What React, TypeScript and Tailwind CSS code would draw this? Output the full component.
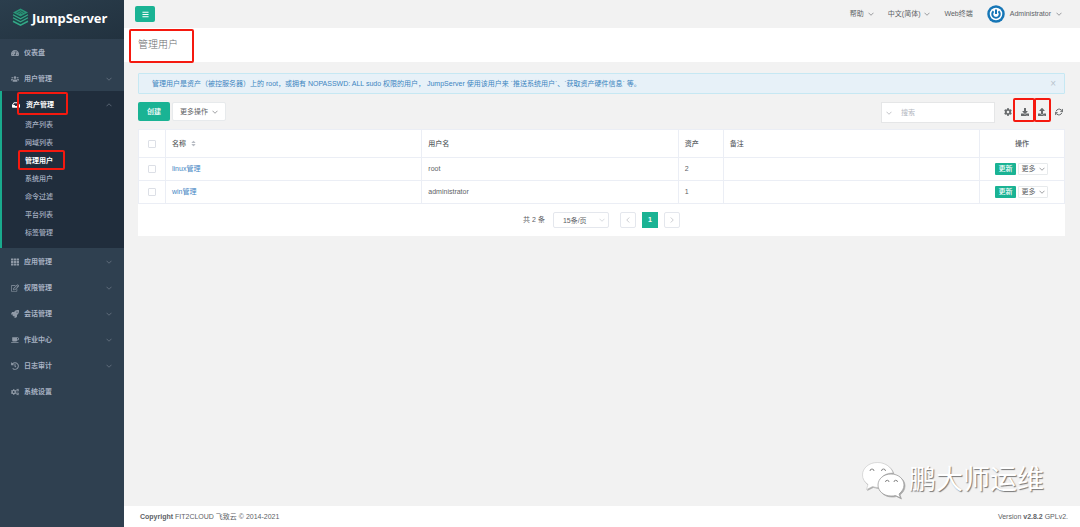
import type { ReactNode } from "react";
import type { IconType } from "react-icons";
import {
  FaBars,
  FaCoffee,
  FaCog,
  FaCogs,
  FaDownload,
  FaHistory,
  FaInbox,
  FaRegEdit,
  FaRocket,
  FaSort,
  FaTachometerAlt,
  FaTh,
  FaUpload,
  FaUsers,
} from "react-icons/fa";
import { FiRefreshCw } from "react-icons/fi";

type MenuItem = {
  label: string;
  icon: IconType;
  expandable?: boolean;
  children?: string[];
};

const menu: MenuItem[] = [
  { label: "仪表盘", icon: FaTachometerAlt },
  { label: "用户管理", icon: FaUsers, expandable: true },
  {
    label: "资产管理",
    icon: FaInbox,
    expandable: true,
    children: ["资产列表", "网域列表", "管理用户", "系统用户", "命令过滤", "平台列表", "标签管理"],
  },
  { label: "应用管理", icon: FaTh, expandable: true },
  { label: "权限管理", icon: FaRegEdit, expandable: true },
  { label: "会话管理", icon: FaRocket, expandable: true },
  { label: "作业中心", icon: FaCoffee, expandable: true },
  { label: "日志审计", icon: FaHistory, expandable: true },
  { label: "系统设置", icon: FaCogs },
];

const activePage = "管理用户";

const adminUsers = [
  { name: "linux管理", username: "root", assets: 2, comment: "" },
  { name: "win管理", username: "administrator", assets: 1, comment: "" },
];

function Chevron({ className = "" }: { className?: string }) {
  return (
    <svg viewBox="0 0 12 12" className={`h-[6px] w-[6px] shrink-0 ${className}`} fill="none" stroke="currentColor" strokeWidth="1.2">
      <path d="M1 3.5 6 8.5 11 3.5" />
    </svg>
  );
}

// Red frame drawn over the part of the UI being pointed out
function Mark({ className }: { className: string }) {
  return <span className={`pointer-events-none absolute z-10 rounded-[2px] border-2 border-[#f5190f] ${className}`} />;
}

function Logo() {
  return (
    <div className="flex h-[39px] items-center gap-[3px] bg-gradient-to-br from-[#2b3e4d] to-[#22323f] pb-1 pl-3">
      <svg viewBox="0 0 34 38" className="h-[19px] w-[17px] shrink-0">
        <path d="M17 1 32 9.5V28.5L17 37 2 28.5V9.5Z" fill="#1d4547" />
        <path d="M17 1 32 9 17 17 2 9Z" fill="#2a9578" />
        <path d="M9 9.500 17 5.500 25 9.500M13 11.500 17 9.500 21 11.500" fill="none" stroke="#1d4545" strokeWidth="1.500" />
        <path d="M2 13.500 17 21.500 32 13.500" fill="none" stroke="#35a888" strokeWidth="2.500" />
        <path d="M2 19.500 17 27.500 32 19.500" fill="none" stroke="#35a888" strokeWidth="2.500" />
        <path d="M2 26.500 17 34.500 32 26.500" fill="none" stroke="#35a888" strokeWidth="3" />
      </svg>
      <span className="font-['Noto_Sans'] text-[13px] font-bold text-white">JumpServer</span>
    </div>
  );
}

function SidebarItem({ item }: { item: MenuItem }) {
  const open = !!item.children;

  return (
    <li className={open ? "border-l-2 border-[#19aa8d] bg-[#202d3c] pb-[7px]" : ""}>
      <a
        href="#"
        className={`relative flex h-[26px] items-center pr-3 pt-px font-bold ${open ? "pl-[10px] text-white" : "pl-[11px] text-[#a7b1c2]"}`}
      >
        <item.icon className={`h-2 w-2 shrink-0 ${open ? "" : "text-[#8f99a6]"}`} />
        <span className={`flex-1 ${open ? "pl-[6px]" : "pl-[5px]"}`}>{item.label}</span>
        {item.expandable && <Chevron className={`text-[#7d8997] ${open ? "rotate-180" : ""}`} />}
        {open && <Mark className="left-[15px] top-[1px] h-[23px] w-[51px]" />}
      </a>
      {open && (
        <ul className="-mt-0.5">
          {item.children?.map((child) => (
            <li key={child}>
              <a
                href="#"
                className={`relative flex h-[18px] items-center pl-[23px] pt-px ${child === activePage ? "font-bold text-white" : "font-medium text-[#a7b1c2]"}`}
              >
                {child}
                {child === activePage && <Mark className="-top-px left-4 h-5 w-[47px]" />}
              </a>
            </li>
          ))}
        </ul>
      )}
    </li>
  );
}

function Topbar() {
  return (
    <header className="flex h-7 items-center justify-between pl-[11px] pr-[18px]">
      <button aria-label="菜单" className="flex h-4 w-5 items-center justify-center rounded-[2px] bg-[#1ab394] text-white">
        <FaBars className="h-[7px] w-[7px]" />
      </button>
      <nav className="flex items-center gap-[14px]">
        <a href="#" className="flex items-center gap-1">
          帮助 <Chevron />
        </a>
        <a href="#" className="flex items-center gap-1">
          中文(简体) <Chevron />
        </a>
        <a href="#">Web终端</a>
        <a href="#" className="flex items-center gap-[5px]">
          <svg viewBox="0 0 36 36" className="h-[18px] w-[18px]">
            <circle cx="18" cy="18" r="17.500" fill="#1676b6" />
            <circle cx="18" cy="18" r="12.500" fill="#fff" />
            <path d="M13 12.500a7.500 7.500 0 1 0 10 0M18 9v9" fill="none" stroke="#1676b6" strokeWidth="4" />
          </svg>
          Administrator <Chevron />
        </a>
      </nav>
    </header>
  );
}

function ToolButton({ label, icon: Icon, children }: { label: string; icon: IconType; children?: ReactNode }) {
  return (
    <button aria-label={label} className="relative flex h-5 w-2 items-center justify-center text-[#676a6c]">
      <Icon className="h-2 w-2 shrink-0" strokeWidth={label === "刷新" ? 3 : undefined} />
      {children}
    </button>
  );
}

function Toolbar() {
  return (
    <div className="mt-2 flex items-start justify-between">
      <div className="flex gap-[2px]">
        <button className="h-[19px] w-8 rounded-[2px] bg-[#1ab394] text-[7px] font-medium text-white">创建</button>
        <button className="flex h-[19px] w-[54px] items-center justify-center gap-1 rounded-[2px] border border-[#e7eaec] bg-white text-[7px]">
          更多操作 <Chevron />
        </button>
      </div>
      <div className="flex items-start gap-[9px] pr-[2px]">
        <label className="flex h-[21px] w-[114px] items-center gap-[9px] border border-[#e5e6e7] bg-white pl-1">
          <Chevron className="text-[#9a9ea5]" />
          <input type="text" aria-label="搜索" placeholder="搜索" className="w-full min-w-0 outline-none placeholder:text-[#b4b8bf]" />
        </label>
        <ToolButton label="设置" icon={FaCog} />
        <ToolButton label="下载" icon={FaDownload}>
          <Mark className="-left-2 -top-1 h-6 w-[22px]" />
        </ToolButton>
        <ToolButton label="上传" icon={FaUpload}>
          <Mark className="-left-1 -top-1 h-6 w-[17px]" />
        </ToolButton>
        <ToolButton label="刷新" icon={FiRefreshCw} />
      </div>
    </div>
  );
}

function Checkbox({ label }: { label: string }) {
  return (
    <input
      type="checkbox"
      aria-label={label}
      className="mx-auto block h-2 w-2 appearance-none rounded-[1px] border border-[#dcdfe6] bg-white"
    />
  );
}

function UserTable() {
  const cell = "border-b border-r border-[#ebeef5] px-[6px]";

  return (
    <table className="w-full table-fixed border-collapse border border-[#ebeef5] text-left">
      <colgroup>
        <col className="w-[27px]" />
        <col />
        <col />
        <col className="w-[45px]" />
        <col />
        <col className="w-[85px]" />
      </colgroup>
      <thead>
        <tr className="h-7 text-[#5a5e64]">
          <th className={cell}><Checkbox label="全选" /></th>
          <th className={`${cell} font-medium`}>
            <span className="flex items-center gap-1">名称 <FaSort className="h-[7px] w-[7px] text-[#b8bcc4]" /></span>
          </th>
          <th className={`${cell} font-medium`}>用户名</th>
          <th className={`${cell} font-medium`}>资产</th>
          <th className={`${cell} font-medium`}>备注</th>
          <th className={`${cell} text-center font-medium`}>操作</th>
        </tr>
      </thead>
      <tbody>
        {adminUsers.map((user) => (
          <tr key={user.name} className="h-[23px]">
            <td className={cell}><Checkbox label={user.name} /></td>
            <td className={cell}><a href="#" className="text-[#3f85c4]">{user.name}</a></td>
            <td className={cell}>{user.username}</td>
            <td className={cell}>{user.assets}</td>
            <td className={cell}>{user.comment}</td>
            <td className={cell}>
              <div className="flex items-center gap-[2px] pl-[9px]">
                <button className="h-3 w-[21px] rounded-[1px] bg-[#1ab394] text-[7px] font-medium leading-3 text-white">更新</button>
                <button className="flex h-3 w-[30px] items-center justify-center gap-[3px] rounded-[1px] border border-[#e7eaec] bg-white text-[7px] leading-[10px]">
                  更多 <Chevron />
                </button>
              </div>
            </td>
          </tr>
        ))}
      </tbody>
    </table>
  );
}

function Pagination() {
  return (
    <div className="flex h-8 items-center justify-center">
      <span>共 2 条</span>
      <div className="relative ml-2">
        <select aria-label="每页条数" className="block h-4 w-14 appearance-none rounded-[2px] border border-[#e4e7ed] bg-white pl-[9px] leading-none outline-none">
          <option>15条/页</option>
        </select>
        <Chevron className="pointer-events-none absolute right-1 top-[5px] text-[#c0c4cc]" />
      </div>
      <div className="ml-[11px] flex gap-[6px]">
        <button aria-label="上一页" className="flex h-4 w-4 items-center justify-center rounded-[2px] border border-[#e4e7ed] text-[#a8abb2]">
          <Chevron className="rotate-90" />
        </button>
        <button className="h-4 w-4 bg-[#1ab394] font-bold text-white">1</button>
        <button aria-label="下一页" className="flex h-4 w-4 items-center justify-center rounded-[2px] border border-[#e4e7ed] text-[#a8abb2]">
          <Chevron className="-rotate-90" />
        </button>
      </div>
    </div>
  );
}

function Watermark() {
  return (
    <div className="absolute bottom-7 right-9 flex items-center gap-1">
      <svg viewBox="0 0 88 76" className="h-[38px] w-11 drop-shadow-[1px_1px_0_#aaa]">
        <path
          d="M33 3C16 3 3 14 3 28c0 8 4 14 11 19l-3 10 12-6c4 1 7 2 11 2h3C33 36 46 24 62 24h2C61 12 48 3 33 3Z"
          fill="#fff" stroke="#bbb" strokeWidth="1"
        />
        <path
          d="M60 26c-15 0-26 10-26 22s11 22 26 22c3 0 6 0 9-1l10 5-3-8c6-5 10-11 10-18 0-12-11-22-26-22Z"
          fill="#fff" stroke="#999" strokeWidth="1.500"
        />
        <g fill="#fff" stroke="#888" strokeWidth="2">
          <path d="M18 20a4 4 0 0 1 8 0M41 20a4 4 0 0 1 8 0M49 42a3.500 3.500 0 0 1 7 0M66 42a3.500 3.500 0 0 1 7 0" />
        </g>
      </svg>
      <span className="text-[27px] leading-9 text-white [text-shadow:1px_1px_1px_#777]">鹏大师运维</span>
    </div>
  );
}

export default function App() {
  return (
    <div className="flex min-h-screen bg-[#f2f2f2] font-['Liberation_Sans','Noto_Sans_CJK_SC',sans-serif] text-[7px] leading-[10px] text-[#606266]">
      <aside className="w-[124px] shrink-0 bg-[#2f4050]">
        <Logo />
        <ul>
          {menu.map((item) => (
            <SidebarItem key={item.label} item={item} />
          ))}
        </ul>
      </aside>

      <div className="relative flex min-w-0 flex-1 flex-col">
        <Topbar />
        <div className="relative h-[34px] bg-white pl-[14px] pt-2">
          <h1 className="text-[10px] font-light leading-[18px] text-[#676a6c]">管理用户</h1>
          <Mark className="left-[5px] top-px h-[34px] w-[65px]" />
        </div>

        <main className="flex-1 pl-[14px] pr-[15px] pt-[11px]">
          <div className="flex h-[21px] items-center justify-between rounded-[1px] border border-[#c6e8f3] bg-[#e7f1f8] pl-[13px] pr-2 text-[#3b84bf]">
            <p>
              管理用户是资产（被控服务器）上的 root，或拥有 NOPASSWD: ALL sudo 权限的用户， JumpServer 使用该用户来 `推送系统用户`、`获取资产硬件信息` 等。
            </p>
            <button aria-label="关闭" className="text-[10px] text-[#b9c4ce]">×</button>
          </div>
          <Toolbar />
          <section className="mt-[6px] bg-white">
            <UserTable />
            <Pagination />
          </section>
        </main>

        <Watermark />
        <footer className="flex h-[21px] items-center justify-between bg-white pl-4 pr-3">
          <span><strong>Copyright</strong> FIT2CLOUD 飞致云 © 2014-2021</span>
          <span>Version <strong>v2.8.2</strong> GPLv2.</span>
        </footer>
      </div>
    </div>
  );
}
